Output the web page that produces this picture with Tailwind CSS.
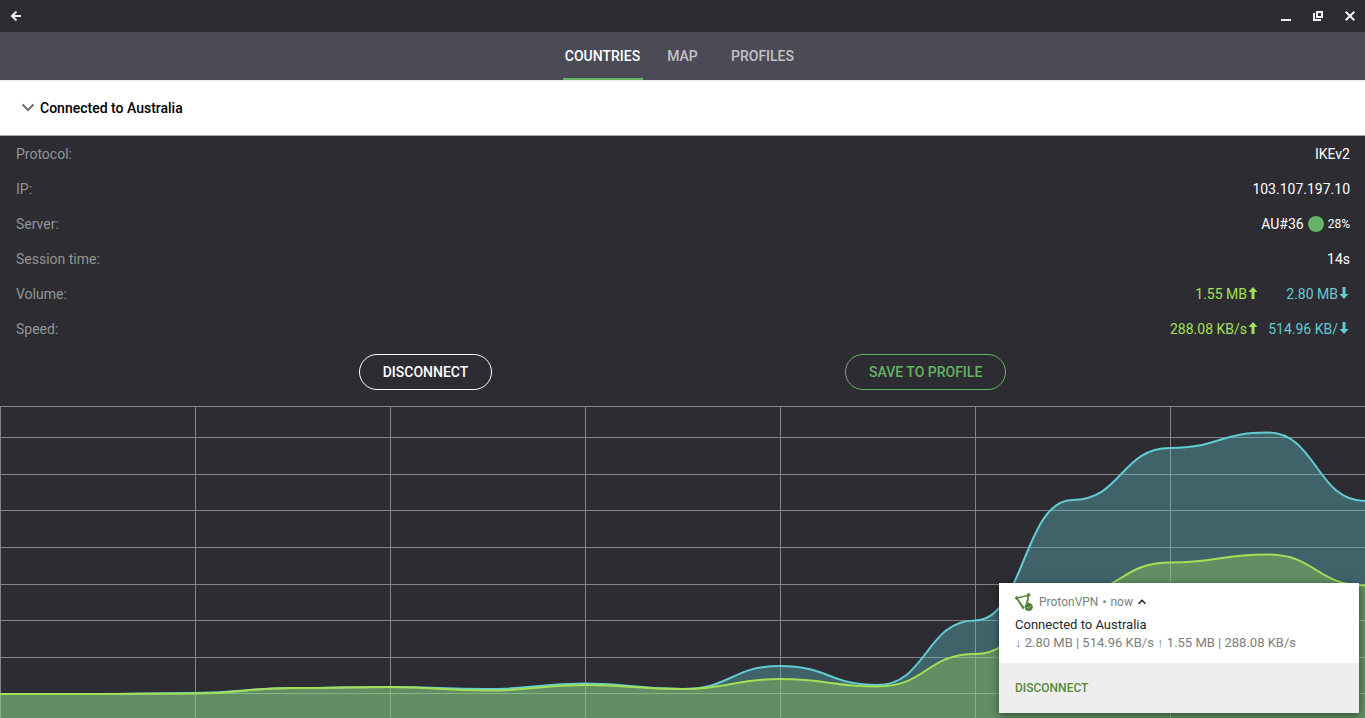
<!DOCTYPE html>
<html lang="en">
<head>
<meta charset="utf-8">
<meta name="viewport" content="width=device-width, initial-scale=1">
<title>ProtonVPN</title>
<script src="https://cdn.jsdelivr.net/npm/@tailwindcss/browser@4"></script>
</head>
<body class="relative flex min-h-screen flex-col overflow-x-hidden bg-[#2d2c32] font-[Roboto,sans-serif] text-sm text-white">
  <header class="flex h-8 shrink-0 items-center justify-between pr-[7px] pl-2 text-[#f0f0f0]">
    <button type="button" aria-label="Back" class="flex size-4 items-center justify-center">
      <svg class="size-4" viewBox="0 0 16 16" fill="none" stroke="currentColor" stroke-width="2"><path d="M13 8H4.500M8.500 3.500 4 8l4.500 4.500"/></svg>
    </button>
    <div class="flex gap-4">
      <button type="button" aria-label="Minimize" class="size-4"><svg class="size-4" viewBox="0 0 16 16" fill="currentColor"><path d="M3 11h10v2H3z"/></svg></button>
      <button type="button" aria-label="Restore" class="size-4"><svg class="size-4" viewBox="0 0 16 16" fill="currentColor"><path fill-rule="evenodd" d="M6 3h7v7H6zM8 5v3h3V5zM3 5h2v6h6v2H3z"/></svg></button>
      <button type="button" aria-label="Close" class="size-4"><svg class="size-4" viewBox="0 0 16 16" fill="none" stroke="currentColor" stroke-width="2"><path d="m3.700 3.700 8.600 8.600M12.300 3.700l-8.600 8.600"/></svg></button>
    </div>
  </header>

  <nav class="flex h-12 shrink-0 justify-center bg-[#4b4b57] font-medium text-[#c3c3c5]">
    <a href="#countries" aria-current="page" class="flex w-20 items-center justify-center border-b-2 border-[#65b365] pt-0.5 text-white">COUNTRIES</a>
    <a href="#map" class="flex w-20 items-center justify-center">MAP</a>
    <a href="#profiles" class="flex w-20 items-center justify-center">PROFILES</a>
  </nav>

  <main class="flex grow flex-col">
    <button type="button" aria-expanded="true" class="flex h-14 shrink-0 items-center gap-1 border-t-2 border-b border-t-[#f0f0f0] border-b-[#a4a6a6] bg-white px-5 pb-0.5 text-left font-medium text-black">
      <svg class="size-4" viewBox="0 0 16 16" fill="none" stroke="#6d6d6d" stroke-width="2"><path d="m2.500 4.500 5.500 5.500 5.500-5.500"/></svg>
      Connected to Australia
    </button>

    <dl class="pr-[15px] pl-4 text-[#929697] [&>div]:flex [&>div]:h-[35px] [&>div]:items-center [&>div]:justify-between">
      <div><dt>Protocol:</dt><dd class="text-white">IKEv2</dd></div>
      <div><dt>IP:</dt><dd class="text-white">103.107.197.10</dd></div>
      <div><dt>Server:</dt><dd class="flex items-center gap-1 text-white">AU#36 <span class="size-4 rounded-full bg-[#69b269]"></span><span class="text-xs">28%</span></dd></div>
      <div><dt>Session time:</dt><dd class="text-white">14s</dd></div>
      <div><dt>Volume:</dt>
        <dd class="flex">
          <span class="flex items-center text-[#a3e057]">1.55 MB<svg class="h-4 w-3" viewBox="0 0 12 16" fill="currentColor"><path d="M6 1 1.500 6h3v7h3V6h3z"/></svg></span>
          <span class="flex w-[91px] items-center justify-end text-[#63cbd4]">2.80 MB<svg class="h-4 w-3" viewBox="0 0 12 16" fill="currentColor"><path d="M6 13 1.500 8h3V1h3v7h3z"/></svg></span>
        </dd></div>
      <div><dt>Speed:</dt>
        <dd class="flex">
          <span class="flex items-center text-[#a3e057]">288.08 KB/s<svg class="h-4 w-3" viewBox="0 0 12 16" fill="currentColor"><path d="M6 1 1.500 6h3v7h3V6h3z"/></svg></span>
          <span class="flex w-[91px] items-center justify-end text-[#63cbd4]">514.96 KB/<svg class="h-4 w-3" viewBox="0 0 12 16" fill="currentColor"><path d="M6 13 1.500 8h3V1h3v7h3z"/></svg></span>
        </dd></div>
    </dl>

    <div class="flex justify-evenly px-1.5 pt-2 pb-4 font-medium">
      <button type="button" class="h-9 rounded-[18px] border border-white px-[23px]">DISCONNECT</button>
      <button type="button" class="h-9 rounded-[18px] border border-[#65b365] px-[23px] text-[#65b365]">SAVE TO PROFILE</button>
    </div>

    <div class="relative min-h-[312px] grow">
      <svg class="absolute inset-0 size-full" viewBox="0 0 1365 312" preserveAspectRatio="none" role="img" aria-label="Traffic speed chart" fill="none">
        <path stroke="#848386" vector-effect="non-scaling-stroke" d="M0 .5H1365M0 31.500H1365M0 68.500H1365M0 104.500H1365M0 141.500H1365M0 178.500H1365M0 214.500H1365M0 251.500H1365M0 287.500H1365M.5 0V312M195.500 0V312M390.500 0V312M585.500 0V312M780.500 0V312M975.500 0V312M1170.500 0V312"/>
        <g id="series"></g>
      </svg>
    </div>
  </main>

  <aside aria-label="Notification" class="absolute right-1.5 bottom-[5px] w-[360px] bg-white text-[13px] shadow-[0_2px_8px_rgba(0,0,0,0.5)]">
    <div class="h-20 px-4 pt-2">
      <div class="flex h-[22px] items-center text-xs text-[#7b7e7e]">
        <svg class="mr-1.5 size-[18px]" viewBox="0 0 18 18" fill="none" stroke="#5b8b3c">
          <path stroke-width="1.500" d="M1.500 5 13.500 2.500 11.500 11M1.500 5 8.500 16M2 5.500 9 15"/>
          <path stroke-width="1.200" d="m13.500 2.500-1 8"/>
          <circle cx="1.800" cy="5" r="1.300" fill="#487a3e"/><circle cx="13.600" cy="2" r="1.400" fill="#487a3e"/>
          <circle cx="13.700" cy="14" r="3.700" fill="#487a3e"/>
          <path stroke="#a5d477" stroke-width="1" d="m11.700 14 1.500 1.500 2.700-2.700"/>
        </svg>
        <span class="flex gap-1"><span>ProtonVPN</span><span>•</span><span>now</span></span>
        <button type="button" aria-label="Collapse notification" class="ml-1"><svg class="size-2.5" viewBox="0 0 10 10" fill="none" stroke="#242424" stroke-width="1.600"><path d="M1.500 6.800 5 3.300l3.500 3.500"/></svg></button>
      </div>
      <p class="mt-[3px] leading-[18px] text-[#25282d]">Connected to Australia</p>
      <p class="leading-[18px] text-[#7b7e7e]">↓ 2.80 MB | 514.96 KB/s ↑ 1.55 MB | 288.08 KB/s</p>
    </div>
    <div class="flex h-[50px] items-center bg-[#eeeeee] px-4">
      <button type="button" class="text-xs font-medium text-[#57883a]">DISCONNECT</button>
    </div>
  </aside>

  <script>
    const step = 97.5;
    const series = [
      { color: '#63cbd4', values: [288, 288, 287, 282, 281, 283, 277.5, 283, 260, 279, 214.5, 94, 42, 26.5, 95] },
      { color: '#a3e057', values: [288, 288, 287.5, 282, 281, 284.5, 279, 283, 273, 280.5, 248, 187, 156.5, 148.5, 179.5] }
    ];
    document.getElementById('series').innerHTML = series.map(({ color, values }) => {
      const line = values.slice(1).reduce((d, y, i) => {
        const x = (i + 1) * step, mid = x - step / 2;
        return `${d}C${mid} ${values[i]} ${mid} ${y} ${x} ${y}`;
      }, `M0 ${values[0]}`);
      return `<path d="${line}V312H0Z" fill="${color}" fill-opacity=".35"/><path d="${line}" stroke="${color}" stroke-width="2" vector-effect="non-scaling-stroke"/>`;
    }).join('');
  </script>
</body>
</html>
